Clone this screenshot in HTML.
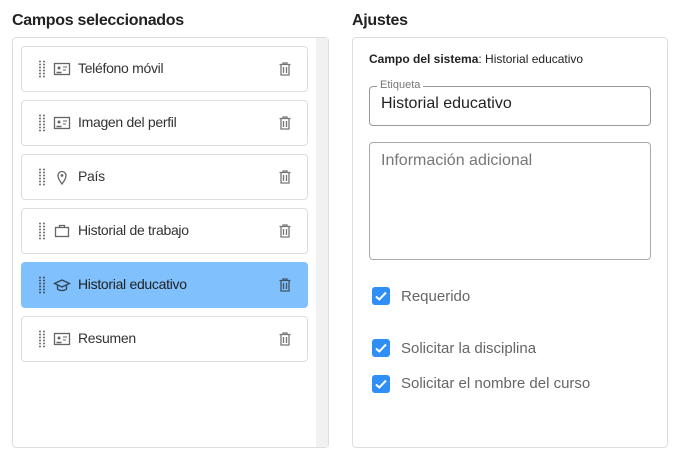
<!DOCTYPE html><html><head><style>
body{margin:0;width:679px;height:465px;background:#fff;font-family:"Liberation Sans",sans-serif;position:relative;overflow:hidden}
.h{position:absolute;top:12px;font-size:16px;font-weight:bold;color:#222;letter-spacing:-0.3px}
.panel{position:absolute;top:37px;height:411px;border:1px solid #ddd;border-radius:4px;box-sizing:border-box}
.item{position:absolute;left:21px;width:287px;height:46px;border:1px solid #ddd;border-radius:4px;box-sizing:border-box;background:#fff}
.item.sel{background:#7fc0fd;border-color:#7fc0fd}
.grip{position:absolute;left:16px;top:13px;width:8px;height:18px;background-image:radial-gradient(circle,#777 0.9px,transparent 1.1px);background-size:4px 3px}
.ic{position:absolute;left:31px;top:14px}
.t{position:absolute;left:56px;top:13px;font-size:14px;color:#333;letter-spacing:-0.3px}
.del{position:absolute;left:257px;top:15px}
.cb{position:absolute;left:372px;width:18px;height:18px;background:#2f8ff5;border-radius:3px}
.cl{position:absolute;left:401px;font-size:15px;color:#666}
</style></head><body>
<div class="h" style="left:12px">Campos seleccionados</div>
<div class="h" style="left:352px">Ajustes</div>
<div class="panel" style="left:12px;width:317px"></div>
<div style="position:absolute;left:316px;top:38px;width:12px;height:409px;background:#f1f1f1"></div>
<div class="panel" style="left:352px;width:316px"></div>

<div class="item" style="top:46px"><div class="grip"></div><svg class="ic" width="18" height="16" viewBox="0 0 18 16"><rect x="1.5" y="2.5" width="15" height="11" fill="none" stroke="#666" stroke-width="1.3"/><circle cx="6" cy="7" r="1.5" fill="#666"/><path d="M3.5 11.5h5" stroke="#666" stroke-width="1.5"/><path d="M10 6h4M10 9h3" stroke="#666"/></svg><div class="t">Teléfono móvil</div><svg class="del" width="12" height="14" viewBox="0 0 12 14"><path d="M0.5 2.5h11M4 2V1h4v1M2 3v10h8V3M4.5 5v6M7.5 5v6" fill="none" stroke="#777" stroke-width="1.3"/></svg></div>
<div class="item" style="top:100px"><div class="grip"></div><svg class="ic" width="18" height="16" viewBox="0 0 18 16"><rect x="1.5" y="2.5" width="15" height="11" fill="none" stroke="#666" stroke-width="1.3"/><circle cx="6" cy="7" r="1.5" fill="#666"/><path d="M3.5 11.5h5" stroke="#666" stroke-width="1.5"/><path d="M10 6h4M10 9h3" stroke="#666"/></svg><div class="t">Imagen del perfil</div><svg class="del" width="12" height="14" viewBox="0 0 12 14"><path d="M0.5 2.5h11M4 2V1h4v1M2 3v10h8V3M4.5 5v6M7.5 5v6" fill="none" stroke="#777" stroke-width="1.3"/></svg></div>
<div class="item" style="top:154px"><div class="grip"></div><svg class="ic" width="18" height="16" viewBox="0 0 18 16"><path d="M9 15C6 11 5 9 5 6.5a4 4 0 0 1 8 0C13 9 12 11 9 15z" fill="none" stroke="#666" stroke-width="1.3"/><circle cx="9" cy="6.5" r="1.4" fill="#666"/></svg><div class="t">País</div><svg class="del" width="12" height="14" viewBox="0 0 12 14"><path d="M0.5 2.5h11M4 2V1h4v1M2 3v10h8V3M4.5 5v6M7.5 5v6" fill="none" stroke="#777" stroke-width="1.3"/></svg></div>
<div class="item" style="top:208px"><div class="grip"></div><svg class="ic" width="18" height="16" viewBox="0 0 18 16"><rect x="2.5" y="4.5" width="13" height="9" fill="none" stroke="#666" stroke-width="1.3"/><path d="M6.5 4.5V2.5h5v2" fill="none" stroke="#666" stroke-width="1.3"/></svg><div class="t">Historial de trabajo</div><svg class="del" width="12" height="14" viewBox="0 0 12 14"><path d="M0.5 2.5h11M4 2V1h4v1M2 3v10h8V3M4.5 5v6M7.5 5v6" fill="none" stroke="#777" stroke-width="1.3"/></svg></div>
<div class="item sel" style="top:262px"><div class="grip" style="background-image:radial-gradient(circle,#456 0.9px,transparent 1.1px)"></div><svg class="ic" width="18" height="16" viewBox="0 0 18 16"><path d="M1.5 6.5L9 3l7.5 3.5L9 10z" fill="none" stroke="#345" stroke-width="1.3"/><path d="M4.5 8v4c2 2 7 2 9 0V8" fill="none" stroke="#345" stroke-width="1.3"/></svg><div class="t" style="color:#222">Historial educativo</div><svg class="del" width="12" height="14" viewBox="0 0 12 14"><path d="M0.5 2.5h11M4 2V1h4v1M2 3v10h8V3M4.5 5v6M7.5 5v6" fill="none" stroke="#456" stroke-width="1.3"/></svg></div>
<div class="item" style="top:316px"><div class="grip"></div><svg class="ic" width="18" height="16" viewBox="0 0 18 16"><rect x="1.5" y="2.5" width="15" height="11" fill="none" stroke="#666" stroke-width="1.3"/><circle cx="6" cy="7" r="1.5" fill="#666"/><path d="M3.5 11.5h5" stroke="#666" stroke-width="1.5"/><path d="M10 6h4M10 9h3" stroke="#666"/></svg><div class="t">Resumen</div><svg class="del" width="12" height="14" viewBox="0 0 12 14"><path d="M0.5 2.5h11M4 2V1h4v1M2 3v10h8V3M4.5 5v6M7.5 5v6" fill="none" stroke="#777" stroke-width="1.3"/></svg></div>

<div style="position:absolute;left:369px;top:52px;font-size:12px;color:#222"><b>Campo del sistema</b>: Historial educativo</div>
<div style="position:absolute;left:369px;top:86px;width:282px;height:40px;border:1px solid #999;border-radius:4px;box-sizing:border-box"></div>
<div style="position:absolute;left:377px;top:79px;padding:0 3px;background:#fff;font-size:11px;color:#777;line-height:13px">Etiqueta</div>
<div style="position:absolute;left:381px;top:95px;font-size:16px;color:#222">Historial educativo</div>
<div style="position:absolute;left:369px;top:142px;width:282px;height:118px;border:1px solid #aaa;border-radius:4px;box-sizing:border-box"></div>
<div style="position:absolute;left:381px;top:152px;font-size:16px;color:#777">Información adicional</div>

<div class="cb" style="top:287px"><svg width="18" height="18"><path d="M4 9.5l3.3 3L14 5.5" fill="none" stroke="#fff" stroke-width="2"/></svg></div>
<div class="cl" style="top:288px">Requerido</div>
<div class="cb" style="top:339px"><svg width="18" height="18"><path d="M4 9.5l3.3 3L14 5.5" fill="none" stroke="#fff" stroke-width="2"/></svg></div>
<div class="cl" style="top:340px">Solicitar la disciplina</div>
<div class="cb" style="top:375px"><svg width="18" height="18"><path d="M4 9.5l3.3 3L14 5.5" fill="none" stroke="#fff" stroke-width="2"/></svg></div>
<div class="cl" style="top:375px">Solicitar el nombre del curso</div>
</body></html>
